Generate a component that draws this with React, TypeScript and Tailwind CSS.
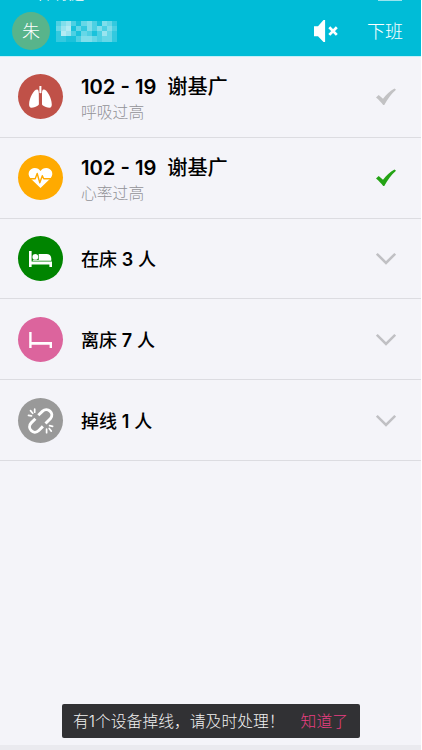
import type { ReactNode } from "react";

const nameBlocks = [
  [3, 5, 6, 3, 1, 4, 5, 3, 1, 5, 4, 2],
  [4, 6, 7, 1, 4, 2, 5, 3, 5, 3, 5, 3],
  [2, 7, 6, 3, 1, 4, 3, 1, 3, 6, 4, 2],
  [2, 2, 1, 1, 3, 5, 5, 4, 3, 4, 4, 2],
];

function LungsIcon() {
  return (
    <svg className="h-[45px] w-[45px]" viewBox="0 0 45 45" fill="#fff">
      <path d="M21.4 12h2v6.3l-1 1.3-1-1.3z" />
      <path d="M20.8 19.6c0-2.2-.3-4-1.7-4-3.2 0-7.900 8-8 15 0 2.1.8 3.200 2.400 3.100 2.300 0 5-1.300 6.500-2.300.8-.6.9-1 .9-2z" />
      <path d="M24 19.6c0-2.200.3-4 1.700-4 3.200 0 8 8 8.100 15 0 2.100-.8 3.200-2.400 3.100-2.300 0-5-1.300-6.500-2.300-.8-.6-.9-1-.9-2z" />
    </svg>
  );
}

function HeartIcon() {
  return (
    <svg className="h-[45px] w-[45px]" viewBox="0 0 45 45" fill="none">
      <path
        d="M22.5 33 12.6 23.4C8.2 18.4 12 13 16.7 13c2.8 0 4.4 1.2 5.8 3.1C23.9 14.2 25.5 13 28.3 13c4.7 0 8.5 5.4 4.1 10.4z"
        fill="#fff"
      />
      <path
        d="M11 23.700h6.200l2-5.200 2.600 9.200 2.500-7 1.400 3h8.300"
        stroke="#ffaa00"
        strokeWidth="1.400"
        strokeLinejoin="round"
      />
    </svg>
  );
}

function InBedIcon() {
  return (
    <svg className="h-[45px] w-[45px]" viewBox="0 0 45 45" fill="#fff">
      <path d="M11 15h2.600v10.600H34V31h-2.600v-2.500H13.600V31H11z" />
      <circle cx="17.300" cy="20.900" r="2.900" />
      <path d="M20.700 18.100h8.200c2.600 0 4.400 2 4.400 4.300v2.400H14.800v-.7h5.900z" />
    </svg>
  );
}

function EmptyBedIcon() {
  return (
    <svg className="h-[45px] w-[45px]" viewBox="0 0 45 45" fill="#fff">
      <path d="M11.200 15h2.400v10H34v6h-2.400v-3.200h-18V31h-2.400z" />
    </svg>
  );
}

function BrokenLinkIcon() {
  return (
    <svg
      className="h-[45px] w-[45px]"
      viewBox="0 0 45 45"
      fill="none"
      stroke="#fff"
      strokeLinecap="round"
    >
      <path
        d="m20.300 17.300 4.300-4.200c4.800-4.400 12.300 2.100 7.900 7.400l-5 5M17.400 20.700l-4.200 4.200c-5 5.200 2.400 12.700 7.600 7.600l4.100-4.100"
        strokeWidth="2.900"
        strokeLinecap="butt"
      />
      <path
        d="M16.700 11.200v3M12.500 12.600l2.200 2.700M10.500 17.300l3 .6M28.600 31.200v3.500M31.200 30.500l2.100 2.600M31.600 27.700l3 .6"
        strokeWidth="1.700"
      />
    </svg>
  );
}

function CheckIcon({ color }: { color: string }) {
  return (
    <svg className="mt-[3px] h-5 w-5" viewBox="0 0 20 20">
      <path
        d="M0 9.400 2.700 7l4.300 3.700C10.200 6.500 14 2.700 18.500.4L20 1.800C15.200 6.100 11.500 11.200 8.300 17H7.200C5.200 14.200 2.900 11.800 0 9.400z"
        fill={color}
      />
    </svg>
  );
}

function ChevronIcon() {
  return (
    <svg className="mt-[2px] h-[14px] w-5" viewBox="0 0 20 14" fill="none">
      <path d="m.8 1.800 9.200 9.200 9.200-9.200" stroke="#c0c0c4" strokeWidth="2.600" />
    </svg>
  );
}

function MuteIcon() {
  return (
    <svg className="h-6 w-6" viewBox="0 0 24 24">
      <path d="M0 7.200h4L9.500 1h1.600v22H9.500L4 17.200H0z" fill="#fff" />
      <path
        d="m15.300 8.300 7.500 7.600m0-7.600-7.500 7.600"
        stroke="#fff"
        strokeWidth="2.700"
      />
    </svg>
  );
}

type RowProps = {
  icon: ReactNode;
  color: string;
  title: ReactNode;
  detail?: string;
  action: ReactNode;
};

function Row({ icon, color, title, detail, action }: RowProps) {
  return (
    <li className="flex h-[80.800px] items-center border-b border-[#dcdce1] pl-[18px] pr-[25px]">
      <div className={`h-[45px] w-[45px] shrink-0 rounded-full ${color}`}>
        {icon}
      </div>
      <div className="ml-[18px] flex-1 whitespace-pre pt-1 text-black">
        {detail ? (
          <>
            <p className="text-[20.200px] font-medium leading-[27px]">{title}</p>
            <p className="text-[15.800px] font-light leading-[25px] text-[#929297]">
              {detail}
            </p>
          </>
        ) : (
          <p className="text-[18px] font-medium leading-7">{title}</p>
        )}
      </div>
      {action}
    </li>
  );
}

function BedTitle({ bed, name }: { bed: string; name: string }) {
  return (
    <>
      <span className="font-semibold">{bed}</span>
      {"  "}
      {name}
    </>
  );
}

function CountTitle({ label, count }: { label: string; count: number }) {
  return (
    <>
      {label} <span className="font-semibold">{count}</span> 人
    </>
  );
}

export default function App() {
  return (
    <div className="h-[750px] w-full overflow-hidden bg-white font-['Inter','Noto_Sans_CJK_SC',sans-serif]">
      <div className="relative flex h-full w-[421px] flex-col bg-[#f4f4f9]">
        <header className="relative flex h-14 shrink-0 items-center overflow-hidden bg-[#00bcd7] pl-3 pr-[18px] pt-[6px] text-white">
          <span className="absolute -top-[11px] left-[34px] text-[12.500px] leading-[14px]">
            中国联通
          </span>
          <span className="absolute left-[378px] top-0 h-px w-6 bg-white/60" />
          <div className="flex h-[38px] w-[38px] items-center justify-center rounded-full bg-[#58b48b] text-[18px] font-light">
            朱
          </div>
          <div className="ml-[6px] grid h-[21px] w-[61px] grid-cols-12">
            {nameBlocks.flat().map((level, i) => (
              <span
                key={i}
                className="bg-white"
                style={{ opacity: level * 0.1 }}
              />
            ))}
          </div>
          <div className="ml-auto mr-[29px]">
            <MuteIcon />
          </div>
          <span className="text-[18px] font-light">下班</span>
        </header>

        <ul className="flex-1 border-t border-[#c5f0f8]">
          <Row
            icon={<LungsIcon />}
            color="bg-[#c05148]"
            title={<BedTitle bed="102 - 19" name="谢基广" />}
            detail="呼吸过高"
            action={<CheckIcon color="#c2c2c4" />}
          />
          <Row
            icon={<HeartIcon />}
            color="bg-[#ffaa00]"
            title={<BedTitle bed="102 - 19" name="谢基广" />}
            detail="心率过高"
            action={<CheckIcon color="#24a315" />}
          />
          <Row
            icon={<InBedIcon />}
            color="bg-[#008400]"
            title={<CountTitle label="在床" count={3} />}
            action={<ChevronIcon />}
          />
          <Row
            icon={<EmptyBedIcon />}
            color="bg-[#dc649d]"
            title={<CountTitle label="离床" count={7} />}
            action={<ChevronIcon />}
          />
          <Row
            icon={<BrokenLinkIcon />}
            color="bg-[#999999]"
            title={<CountTitle label="掉线" count={1} />}
            action={<ChevronIcon />}
          />
        </ul>

        <div className="h-[5px] shrink-0 bg-[#eaeaef]" />

        <div className="absolute bottom-3 left-[62px] flex h-[34px] w-[298px] items-center justify-between rounded-[2px] bg-[#313134] pl-[11px] pr-3 pt-[2px] text-[15.800px] font-light text-[#f0f0f0]">
          <span>有1个设备掉线，请及时处理！</span>
          <button className="text-[#e83e80]">知道了</button>
        </div>
      </div>
    </div>
  );
}
